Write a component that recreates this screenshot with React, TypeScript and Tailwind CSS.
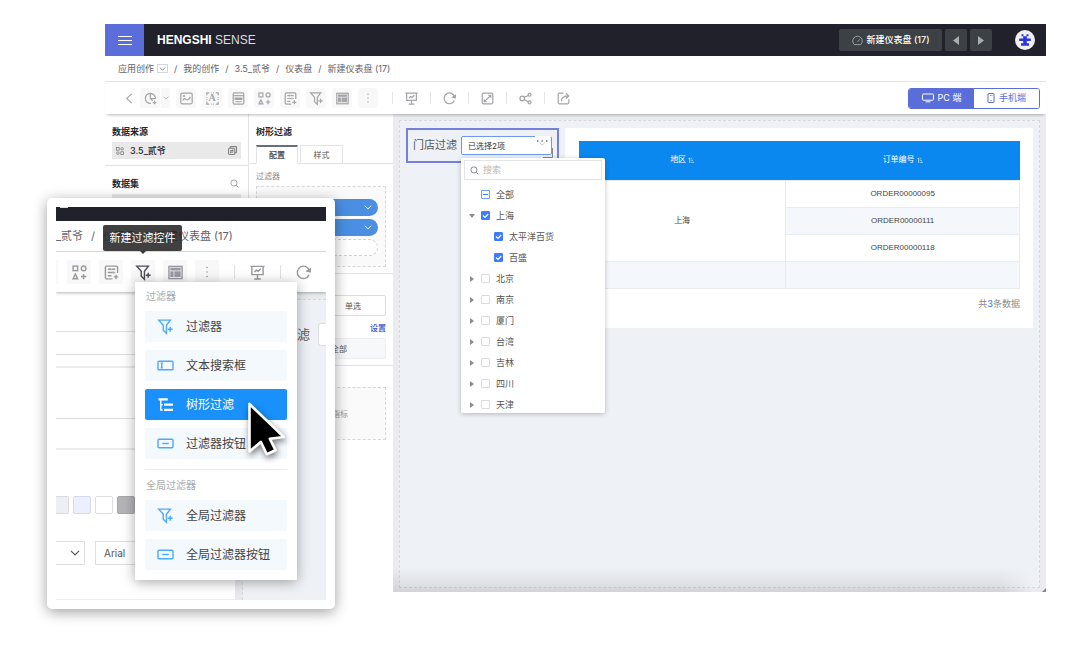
import type { ReactNode } from "react";

const icons: Record<string, ReactNode> = {
  chart: (
    <>
      <path d="M14 8.5A6.2 6.2 0 1 0 8.5 14M7.8 1.8V8.2H14M8 8.2l2.6 2.6" />
      <path d="M13 10.8v4.4M10.8 13h4.4" />
    </>
  ),
  image: (
    <>
      <rect x="1" y="1.5" width="14" height="13" rx="1.5" />
      <path d="M3.5 10.5C5 7.5 6 8 7.5 9.2S11 9 12.8 6" />
      <circle cx="5" cy="5" r=".6" />
    </>
  ),
  corners: (
    <>
      <path d="M1 4V1h3M12 1h3v3M15 12v3h-3M4 15H1v-3" />
      <path d="M6 1h4M6 15h4M1 6v4M15 6v4" strokeDasharray="1 1.5" />
    </>
  ),
  form: (
    <>
      <rect x="1.5" y="1" width="13" height="14" rx="1.5" />
      <path d="M1.5 4.5h13" />
      <path d="M4 7.5h8v1.5H4zM4 12h8" />
    </>
  ),
  shapes: (
    <>
      <rect x="1.2" y="1.2" width="4.8" height="4.8" />
      <circle cx="12.4" cy="3.6" r="2.5" />
      <path d="M3.6 9.7 1.2 14.6H6zM12.4 9.5v5.6M9.6 12.3h5.6" />
    </>
  ),
  list: (
    <>
      <path d="M14.5 8.5v-6A1.3 1.3 0 0 0 13.2 1.2H2.8a1.3 1.3 0 0 0-1.3 1.3v11a1.3 1.3 0 0 0 1.3 1.3H9" />
      <path d="M4 4.5h2M8 4.5h4M4 8h5M11 8h1M4 11.5h4M6.8 3.5v2M10 7v2" />
      <path d="M12.8 10.3v4.8M10.4 12.7h4.8" />
    </>
  ),
  funnel: (
    <>
      <path d="M.8 1.2h12.4L9 6.7v8.5L5.6 12V6.7z" />
      <path d="M13 8.3v5.2M10.4 10.9h5.2" />
    </>
  ),
  layout: (
    <>
      <rect x="1" y="1.5" width="14" height="13" />
      <path d="M3.2 3.8h9.600v1.400H3.200zM3.200 7.500h2v4.500h-2zM7.500 7.500h5.300v4.500H7.500z" fill="currentColor" />
    </>
  ),
  board: (
    <>
      <path d="M.5 1.5h15M2 1.5v8.8h12V1.5M8 10.5V15M4.5 15h7M4.8 7.5l2-2 1.8 1.2L11.5 4" />
    </>
  ),
  refresh: (
    <>
      <path d="M14 10.5A6.6 6.6 0 1 1 14.5 7" />
      <path d="M11.8 6.400 15 7.4l.3-3.200z" fill="currentColor" />
    </>
  ),
  expand: (
    <>
      <rect x="1.5" y="1.5" width="13" height="13" rx="1.5" />
      <path d="m4.2 11.8 7.6-7.6M8.8 4h3.2v3.2M7.2 12H4V8.8" />
    </>
  ),
  share: (
    <>
      <circle cx="4" cy="8" r="2.8" />
      <circle cx="13" cy="3.4" r="1.8" />
      <circle cx="13" cy="12.8" r="1.8" />
      <path d="m6.5 6.7 4.8-2.4M6.5 9.3l4.8 2.6" />
    </>
  ),
  export: (
    <>
      <path d="M8 1.5H3A1.5 1.5 0 0 0 1.5 3v10A1.5 1.5 0 0 0 3 14.5h10a1.5 1.5 0 0 0 1.5-1.5V9" />
      <path d="M5.5 11.5C5.3 7 8.5 4.8 14 4.8M11 1.5l3.5 3.3L11 8" />
    </>
  ),
  search: (
    <>
      <circle cx="7" cy="7" r="5.5" />
      <path d="m11 11 4 4" />
    </>
  ),
  textbox: (
    <>
      <rect x="0" y="3.4" width="16" height="9.2" rx="1" />
      <path d="M4 5.6v4.8M2.9 5.6h2.2M2.9 10.4h2.2" />
    </>
  ),
  pill: (
    <>
      <rect x="0" y="3.4" width="16" height="9.2" rx="1.2" />
      <path d="M4.5 8h7" />
    </>
  ),
  tree: (
    <>
      <path d="M.5 2.5h10M6.5 8.2H16M6.5 13.8H16" strokeWidth="2.4" />
      <path d="M3 3v10.8h2M3 8.2h2" />
    </>
  ),
  source: (
    <>
      <rect x="1.2" y="1.2" width="5.2" height="5.2" />
      <rect x="9.6" y="1.2" width="5.2" height="5.2" rx="2.6" />
      <rect x="1.2" y="9.6" width="5.2" height="5.2" rx="2.6" />
      <rect x="9.6" y="9.6" width="5.2" height="5.2" />
    </>
  ),
  swap: (
    <>
      <path d="M4 3.5V1h11v11h-2.5" />
      <rect x="1" y="4" width="11" height="11" rx="1" />
      <path d="M3.5 8.3h6L7.7 6.6M9.5 10.8h-6l1.8 1.7" />
    </>
  ),
};

function Icon({ name, className }: { name: string; className: string }) {
  return (
    <svg
      viewBox="0 0 16 16"
      className={`shrink-0 overflow-visible ${className}`}
      fill="none"
      stroke="currentColor"
      strokeWidth="1.5"
      aria-hidden="true"
    >
      {icons[name]}
    </svg>
  );
}

function Chevron({ className }: { className: string }) {
  return (
    <svg viewBox="0 0 10 6" className={`shrink-0 ${className}`} fill="none" stroke="currentColor" strokeWidth="1.2" aria-hidden="true">
      <path d="m1 .8 4 4 4-4" />
    </svg>
  );
}

function Dots({ className }: { className: string }) {
  return (
    <svg viewBox="0 0 2 12" className={className} fill="currentColor" aria-hidden="true">
      <circle cx="1" cy="1.5" r=".8" />
      <circle cx="1" cy="6" r=".8" />
      <circle cx="1" cy="10.5" r=".8" />
    </svg>
  );
}

function TopBar() {
  return (
    <header className="flex h-8 shrink-0 items-center bg-[#21212b] text-white">
      <button aria-label="菜单" className="flex h-full w-[39px] items-center justify-center bg-[#5a6dd8]">
        <svg viewBox="0 0 14 11" className="h-[11px] w-[14px]" stroke="white" strokeWidth="1.1" aria-hidden="true">
          <path d="M0 1.5h14M0 5.5h14M0 9.5h14" />
        </svg>
      </button>
      <h1 className="ml-[13px] flex-1 font-[Liberation_Sans] text-[12px]">
        <b>HENGSHI</b> <span className="text-[#dcdce0]">SENSE</span>
      </h1>
      <button className="flex h-[22px] w-[103px] items-center justify-center gap-1 rounded-[2px] bg-[#3c4145] text-[9px] font-medium whitespace-nowrap">
        <svg viewBox="0 0 12 12" className="size-[11px]" fill="none" stroke="#a5a8ab" strokeWidth="1" aria-hidden="true">
          <path d="M2.6 10.5A5.2 5.2 0 1 1 9.4 10.5zM6 7.5l2.5-2.8" />
        </svg>
        新建仪表盘 (17)
      </button>
      <button aria-label="上一个" className="ml-[3px] flex h-[22px] w-[22px] items-center justify-center rounded-[2px] bg-[#3c4145] text-[#a9acaf]">
        <svg viewBox="0 0 6 9" className="h-[9px] w-[6px]" fill="currentColor"><path d="M6 0v9L0 4.5z" /></svg>
      </button>
      <button aria-label="下一个" className="ml-[3px] flex h-[22px] w-[22px] items-center justify-center rounded-[2px] bg-[#3c4145] text-[#a9acaf]">
        <svg viewBox="0 0 6 9" className="h-[9px] w-[6px]" fill="currentColor"><path d="M0 0v9l6-4.5z" /></svg>
      </button>
      <button aria-label="用户" className="mr-[11px] ml-[23px] size-5 rounded-full bg-[#f0f0f2]">
        <svg viewBox="0 0 20 20" className="size-5" fill="#2b35dc" aria-hidden="true">
          <path d="M6.500 4.300h2v2h3v-2h2v2h-1.700v2.200h4v2.500h-4v2.300H14v2.400H6v-2.400h2.200v-2.300h-4V8.500h4V6.300H6.500z" />
        </svg>
      </button>
    </header>
  );
}

function Breadcrumb() {
  return (
    <nav className="flex h-[26px] shrink-0 items-center gap-[6px] border-b border-[#e4e4e7] pl-[13px] text-[9px] text-[#60606c]">
      <span className="flex items-center gap-[3px]">
        <a href="#apps">应用创作</a>
        <button aria-label="展开" className="flex h-[9px] w-[11px] items-center justify-center border border-[#d6d6da]">
          <Chevron className="h-[4px] w-[7px]" />
        </button>
      </span>
      <span>/</span>
      <a href="#mine">我的创作</a>
      <span>/</span>
      <a href="#app">3.5_贰爷</a>
      <span>/</span>
      <a href="#dashboards">仪表盘</a>
      <span>/</span>
      <span>新建仪表盘 (17)</span>
    </nav>
  );
}

function ToolButton({ label, children }: { label: string; children: ReactNode }) {
  return (
    <button aria-label={label} className="flex size-5 items-center justify-center rounded-[3px] bg-[#f8f8f8]">
      {children}
    </button>
  );
}

const actions = [
  ["演示", "board"],
  ["刷新", "refresh"],
  ["全屏", "expand"],
  ["分享", "share"],
  ["导出", "export"],
];

function Toolbar() {
  return (
    <div className="z-[2] flex h-8 shrink-0 items-center bg-white pr-[6px] pl-[20px] text-[#a4a4a9] shadow-[0_3px_3px_-2px_rgba(0,0,0,0.28)]">
      <button aria-label="返回" className="mr-[7px]">
        <svg viewBox="0 0 8 12" className="h-[11px] w-[8px]" fill="none" stroke="currentColor" strokeWidth="1.2"><path d="M7 1 1.500 6 7 11" /></svg>
      </button>
      <div className="flex gap-[6px]">
        <div className="flex gap-px">
          <ToolButton label="图表"><Icon name="chart" className="size-[13px]" /></ToolButton>
          <button aria-label="更多图表" className="flex h-5 w-[9px] items-center justify-center rounded-[2px] bg-[#f8f8f8]">
            <Chevron className="h-[4px] w-[6px]" />
          </button>
        </div>
        <ToolButton label="图片"><Icon name="image" className="size-[13px]" /></ToolButton>
        <ToolButton label="文本">
          <span className="grid place-items-center">
            <Icon name="corners" className="col-start-1 row-start-1 size-[13px]" />
            <b className="col-start-1 row-start-1 font-[Liberation_Serif] text-[10px] leading-none">A</b>
          </span>
        </ToolButton>
        <ToolButton label="表单"><Icon name="form" className="size-[13px]" /></ToolButton>
        <ToolButton label="图形"><Icon name="shapes" className="size-[13px]" /></ToolButton>
        <ToolButton label="列表"><Icon name="list" className="size-[13px]" /></ToolButton>
        <ToolButton label="过滤控件"><Icon name="funnel" className="size-[13px]" /></ToolButton>
        <ToolButton label="布局"><Icon name="layout" className="size-[13px]" /></ToolButton>
        <ToolButton label="更多"><Dots className="h-[10px] w-[2px]" /></ToolButton>
      </div>
      <div className="ml-[14px] flex flex-1">
        {actions.map(([label, icon]) => (
          <div key={label} className="flex w-[38px] items-center gap-[12px]">
            <span className="h-3 w-px bg-[#e4e4e6]" />
            <button aria-label={label}><Icon name={icon} className="size-[13px]" /></button>
          </div>
        ))}
      </div>
      <div className="flex h-[21px] overflow-hidden rounded-[3px] border border-[#5a6dd8] text-[9px] text-[#5a6dd8]">
        <button className="flex w-[65px] items-center justify-center gap-1 bg-[#5a6dd8] text-white">
          <svg viewBox="0 0 12 10" className="h-[10px] w-[12px]" fill="none" stroke="currentColor" aria-hidden="true">
            <rect x=".5" y="1" width="11" height="6.200" rx=".8" />
            <path d="M3.500 8.800h5" />
          </svg>
          PC 端
        </button>
        <button className="flex w-[65px] items-center justify-center gap-1 bg-white">
          <svg viewBox="0 0 8 10" className="h-[10px] w-[8px]" fill="none" stroke="currentColor" aria-hidden="true">
            <rect x="1" y=".5" width="6" height="9" rx=".5" />
            <path d="M3 2.500h.8M4.500 2.500h.8M3.500 7.500h1" />
          </svg>
          手机端
        </button>
      </div>
    </div>
  );
}

function DataPanel() {
  return (
    <aside className="w-36 shrink-0 border-r border-[#e3e3e6] text-[9px] text-[#26262e]">
      <section className="h-[52px] border-b border-[#e3e3e6] px-[7px] pt-[11px]">
        <h2 className="leading-[14px] font-bold">数据来源</h2>
        <div className="mt-[3px] flex h-[17px] items-center bg-[#e9e9e9] px-1 font-medium">
          <Icon name="source" className="mr-[6px] size-2 text-[#777]" />
          <span className="flex-1">3.5_贰爷</span>
          <Icon name="swap" className="size-[9px] text-[#666]" />
        </div>
      </section>
      <section className="px-[7px] pt-[10px]">
        <div className="flex h-[15px] items-center justify-between">
          <h2 className="font-bold">数据集</h2>
          <button aria-label="搜索数据集" className="mr-[2px] text-[#999]"><Icon name="search" className="size-[9px]" /></button>
        </div>
        <div className="mt-[3px] h-[17px] bg-[#e9e9e9]" />
      </section>
    </aside>
  );
}

function FilterPill() {
  return (
    <button aria-label="过滤字段" className="flex h-[17px] w-full items-center justify-end rounded-full bg-[#4a8fe2] pr-[6px] text-white">
      <Chevron className="h-[5px] w-[8px]" />
    </button>
  );
}

function ConfigPanel() {
  return (
    <aside className="w-36 shrink-0 bg-white text-[8px] text-[#555]">
      <h2 className="px-[7px] pt-[11px] text-[9px] leading-[14px] font-bold text-[#26262e]">树形过滤</h2>
      <div className="mt-[6px] flex h-[19px] gap-[2px] border-b border-[#e3e3e6] px-[7px]">
        <button className="-mb-px w-[42px] border border-t-2 border-[#e3e3e6] border-t-[#65707c] border-b-white font-bold">配置</button>
        <button className="w-[43px] border border-b-0 border-[#e3e3e6]">样式</button>
      </div>
      <section className="h-[110px] border-b border-[#e3e3e6] px-[7px] pt-[6px]">
        <h3 className="leading-[12px] text-[#888]">过滤器</h3>
        <div className="mt-1 flex h-[81px] flex-col gap-[3px] border border-dashed border-[#d8d8db] bg-[#fafafa] px-[7px] pt-[12px]">
          <FilterPill />
          <FilterPill />
          <div className="h-[17px] rounded-full border border-dashed border-[#d0d0d4] bg-white" />
        </div>
      </section>
      <section className="h-[92px] border-b border-[#e3e3e6] px-[7px] pt-[21px]">
        <div className="flex h-[21px] rounded-[2px] border border-[#dcdcdf]">
          <button className="flex-1">多选</button>
          <button className="flex-1">单选</button>
        </div>
        <div className="flex h-[22px] items-center justify-end pt-px font-medium"><a href="#settings" className="text-[#3b49d8]">设置</a></div>
        <div className="flex h-[21px] items-center justify-end rounded-[2px] border border-[#eeeef0] bg-[#f7f8fa] pr-[38px]">全部</div>
      </section>
      <section className="px-[7px] pt-[21px]">
        <div className="flex h-[53px] items-center justify-end border border-dashed border-[#d8d8db] bg-[#fafafa] pr-[37px] text-[#999]">指标</div>
      </section>
    </aside>
  );
}

type Node = { name: string; state: "on" | "off" | "mixed"; level: number; open?: boolean };

const nodes: Node[] = [
  { name: "全部", state: "mixed", level: 0 },
  { name: "上海", state: "on", level: 0, open: true },
  { name: "太平洋百货", state: "on", level: 1 },
  { name: "百盛", state: "on", level: 1 },
  { name: "北京", state: "off", level: 0, open: false },
  { name: "南京", state: "off", level: 0, open: false },
  { name: "厦门", state: "off", level: 0, open: false },
  { name: "台湾", state: "off", level: 0, open: false },
  { name: "吉林", state: "off", level: 0, open: false },
  { name: "四川", state: "off", level: 0, open: false },
  { name: "天津", state: "off", level: 0, open: false },
];

function TreeRow({ node }: { node: Node }) {
  return (
    <li className={`flex h-[21px] items-center pl-2 ${node.level === 1 ? "ml-[13px]" : ""}`}>
      <span className="flex w-3 items-center">
        {node.open !== undefined && (
          <button aria-label={`展开${node.name}`} className="text-[#8c8c8c]">
            <svg viewBox="0 0 6 6" className="size-[6px]" fill="currentColor">
              <path d={node.open ? "M0 1h6L3 5z" : "M1 0v6l4-3z"} />
            </svg>
          </button>
        )}
      </span>
      <label className="flex items-center">
        <span className="grid">
          <input
            type="checkbox"
            defaultChecked={node.state === "on"}
            className={`col-start-1 row-start-1 size-[9px] appearance-none rounded-[1px] border ${
              node.state === "on" ? "border-[#3d7bff] bg-[#3d7bff]" : node.state === "mixed" ? "border-[#6f9cff]" : "border-[#dcdcdc]"
            }`}
          />
          <svg viewBox="0 0 9 9" className="pointer-events-none col-start-1 row-start-1 size-[9px]" fill="none" strokeWidth="1.2" aria-hidden="true">
            {node.state === "on" && <path d="M2 4.500 4 6.400 7.200 3" stroke="white" />}
            {node.state === "mixed" && <path d="M2 4.500h5" stroke="#3d7bff" />}
          </svg>
        </span>
        <span className="ml-[6px]">{node.name}</span>
      </label>
    </li>
  );
}

function StoreFilter() {
  return (
    <section className="relative z-[1] flex h-[35px] w-[153px] shrink-0 items-center border-2 border-[#7580dc] pl-[5px]">
      <h2 id="store-label" className="w-12 text-[11px] whitespace-nowrap text-[#555]">门店过滤</h2>
      <div className="relative">
        <button
          aria-labelledby="store-label"
          className="flex h-[19px] w-[91px] items-center justify-between rounded-[2px] border border-[#6b98f5] bg-white pl-[6px] text-[8px] text-[#333]"
        >
          已选择2项
          <svg viewBox="0 0 16 16" className="-mt-[3px] h-4 w-4" fill="none" aria-hidden="true">
            <path d="M-2 0h18" stroke="white" strokeWidth="2" />
            <path d="M2 5h1.400M6.500 5h1.400M11 5h1.400" stroke="#666" strokeWidth="1.300" />
            <path d="M4.500 6.500 7.200 9.200l2.700-2.700" stroke="#b5b5b5" strokeWidth=".8" />
          </svg>
        </button>
        <svg viewBox="0 0 10 10" className="absolute top-[12px] right-[-1px] size-[10px]" fill="none" stroke="#888" aria-hidden="true">
          <path d="M9.500 0v9.500H0" />
        </svg>
        <div className="absolute top-[22px] left-0 w-[144px] overflow-hidden rounded-[2px] bg-white shadow-[0_1px_5px_rgba(0,0,0,0.25)]">
          <label className="mx-[3px] mt-[2px] flex h-5 items-center gap-1 border border-[#e2e4e8] pl-[5px] text-[#777]">
            <Icon name="search" className="size-[9px]" />
            <input aria-label="搜索" placeholder="搜索" className="w-full min-w-0 text-[9px] outline-none placeholder:text-[#b8b8b8]" />
          </label>
          <ul className="mt-1 -mb-[2px] text-[9px] leading-none text-[#555]">
            {nodes.map((n) => <TreeRow key={n.name} node={n} />)}
          </ul>
        </div>
      </div>
    </section>
  );
}

function SortMark() {
  return (
    <svg viewBox="0 0 7 7" className="ml-[2px] inline size-[6px]" fill="none" stroke="currentColor" strokeWidth=".8" aria-hidden="true">
      <path d="M2 7V1L.5 2.500M3.800 1.500h1M3.800 3.800h2M3.800 6.200h3" />
    </svg>
  );
}

function OrderCard() {
  return (
    <section className="min-w-0 flex-1 bg-white px-[13px] pt-[13px] pb-[17px]">
      <table className="w-full border-collapse text-center font-[Liberation_Sans,Noto_Sans_CJK_SC,sans-serif] text-[8px] text-[#444]">
        <thead>
          <tr className="h-[39px] bg-[#0a88ef] text-white">
            <th className="w-[47%] font-normal">地区<SortMark /></th>
            <th className="font-normal">订单编号<SortMark /></th>
          </tr>
        </thead>
        <tbody>
          <tr className="h-[27px]">
            <td rowSpan={3} className="border border-[#e9ecef]">上海</td>
            <td className="border border-[#e9ecef]">ORDER00000095</td>
          </tr>
          <tr className="h-[27px]"><td className="border border-[#e9ecef] bg-[#f4f8fc]">ORDER00000111</td></tr>
          <tr className="h-[27px]"><td className="border border-[#e9ecef]">ORDER00000118</td></tr>
          <tr className="h-[27px] bg-[#f4f8fc]">
            <td className="border border-[#e9ecef]" />
            <td className="border border-[#e9ecef]" />
          </tr>
        </tbody>
      </table>
      <p className="mt-2 text-right text-[9px] leading-[14px] text-[#888]">共<span className="font-medium text-[#3d7bff]">3</span>条数据</p>
    </section>
  );
}

const menuGroups = [
  {
    title: "过滤器",
    items: [
      ["过滤器", "funnel"],
      ["文本搜索框", "textbox"],
      ["树形过滤", "tree"],
      ["过滤器按钮", "pill"],
    ],
  },
  {
    title: "全局过滤器",
    items: [
      ["全局过滤器", "funnel"],
      ["全局过滤器按钮", "pill"],
    ],
  },
];

function FilterMenu() {
  return (
    <div className="absolute top-[75px] left-[79px] w-[162px] bg-white px-[10px] pb-[10px] shadow-[0_2px_12px_rgba(0,0,0,0.35)]">
      {menuGroups.map((g, i) => (
        <section key={g.title} className={i === 0 ? "" : "mt-[10px] border-t border-[#ececee] pt-px"}>
          <h3 className="flex h-[29px] items-center pl-px text-[10px] text-[#aaa]">{g.title}</h3>
          <div className="flex flex-col gap-2">
            {g.items.map(([label, icon]) => (
              <button
                key={label}
                className={`flex h-[31px] items-center rounded-[2px] pl-[13px] text-[12px] ${
                  label === "树形过滤" ? "bg-[#1a90fa] text-white" : "bg-[#f4f9fe] text-[#444]"
                }`}
              >
                <Icon name={icon} className={`mr-[13px] size-[15px] ${label === "树形过滤" ? "text-white" : "text-[#4da9fb]"}`} />
                {label}
              </button>
            ))}
          </div>
        </section>
      ))}
      <svg viewBox="0 0 40 54" className="absolute top-[119px] left-[112px] h-[54px] w-10 overflow-visible drop-shadow-[1px_3px_3px_rgba(0,0,0,0.5)]" aria-hidden="true">
        <path d="M2.500 3v47.500l11.300-9.600 6 12.300 8.700-4-5.700-11.500 14-1.700z" fill="black" stroke="white" strokeWidth="2.600" strokeLinejoin="round" />
      </svg>
    </div>
  );
}

function MagnifiedTool({ name, dark }: { name: string; dark?: boolean }) {
  return (
    <button aria-label={name} className={`flex size-6 shrink-0 items-center justify-center rounded-[3px] bg-[#f8f8f8] ${dark ? "text-[#4c4c5a]" : ""}`}>
      {name === "more" ? <Dots className="h-3 w-[2px]" /> : <Icon name={name} className="size-[15px]" />}
    </button>
  );
}

function Magnifier() {
  return (
    <div className="absolute top-[198px] left-[47px] z-10 w-[288px] rounded-[5px] bg-white p-[9px] shadow-[0_3px_14px_rgba(0,0,0,0.38)]">
      <div className="relative">
        <div className="overflow-hidden">
          <div className="h-[14px] bg-[#21212b]"><div className="ml-[4px] h-px w-2 bg-[#ddd]" /></div>
          <nav className="flex h-[31px] items-center gap-2 border-b border-[#e4e4e7] pt-px text-[11px] whitespace-nowrap text-[#60606c]">
            <span>_贰爷</span>
            <span>/</span>
            <span>仪表盘</span>
            <span>/</span>
            <span>新建仪表盘 (17)</span>
          </nav>
          <div className="relative flex h-10 items-center bg-white text-[#98989f] shadow-[0_1px_3px_rgba(0,0,0,0.3)]">
            <span className="mr-[9px] h-6 w-[2px] shrink-0 bg-[#f8f8f8]" />
            <div className="flex gap-2">
              <MagnifiedTool name="shapes" />
              <MagnifiedTool name="list" />
              <MagnifiedTool name="funnel" dark />
              <MagnifiedTool name="layout" />
              <MagnifiedTool name="more" />
            </div>
            <span className="mx-[15px] h-[14px] w-px shrink-0 bg-[#e0e0e3]" />
            <Icon name="board" className="size-[15px]" />
            <span className="mx-[15px] h-[14px] w-px shrink-0 bg-[#e0e0e3]" />
            <Icon name="refresh" className="size-[15px]" />
          </div>
          <div className="flex h-[308px]">
            <div className="w-[179px] border-b border-[#eeeeef]">
              <div className="h-10 border-b border-[#dfdfe2]" />
              <div className="h-[23px] border-b border-[#dfdfe2]" />
              <div className="h-[13px] border-b-2 border-[#ececee]" />
              <div className="h-[51px] border-b border-[#dfdfe2]" />
              <div className="h-[31px] border-b-2 border-[#ececee]" />
              <div className="mt-[46px] flex gap-[4px]">
                <span className="h-[18px] w-[13px] rounded-r-[2px] border border-l-0 border-[#dcdce0] bg-[#eeeff4]" />
                <span className="size-[18px] rounded-[2px] border border-[#d5dae6] bg-[#eaf0fd]" />
                <span className="size-[18px] rounded-[2px] border border-[#dedee0] bg-white" />
                <span className="size-[18px] rounded-[2px] border border-[#a8a8aa] bg-[#b4b4b6]" />
              </div>
              <div className="mt-[27px] flex gap-[10px] text-[10px] text-[#555]">
                <button aria-label="字号" className="flex h-6 w-[29px] items-center justify-end border border-l-0 border-[#dedee1] pr-1"><Chevron className="h-[6px] w-[10px]" /></button>
                <button className="flex h-6 w-[90px] items-center border border-[#dedee1] pl-2">Arial</button>
              </div>
            </div>
            <div className="flex-1 bg-[#e9eaef] pt-[7px] pl-[7px]">
              <div className="flex h-full items-start justify-between border-t border-l border-dashed border-[#d5d8dd] bg-[#eef2f6] pt-[23px] pl-[54px]">
                <span className="pt-[2px] text-[13px] text-[#555]">滤</span>
                <span className="h-[23px] w-2 rounded-l-[3px] border border-r-0 border-[#dcdfe3] bg-white" />
              </div>
            </div>
          </div>
        </div>
        <div role="tooltip" className="absolute top-[18px] left-[47px] flex h-[26px] w-[79px] items-center justify-center rounded-[2px] bg-[rgba(38,38,38,0.88)] text-[11px] whitespace-nowrap text-white">
          新建过滤控件
          <svg viewBox="0 0 6 3" className="absolute top-full left-[37px] h-[3px] w-[6px]" fill="#38383a" aria-hidden="true"><path d="M0 0h6L3 3z" /></svg>
        </div>
        <FilterMenu />
      </div>
    </div>
  );
}

export default function App() {
  return (
    <main className="relative flex min-h-screen flex-col bg-white pt-6 pr-[34px] pb-[55px] pl-[105px] font-[Inter,Noto_Sans_CJK_SC,sans-serif]">
      <div className="flex flex-1 flex-col">
        <TopBar />
        <Breadcrumb />
        <Toolbar />
        <div className="flex flex-1">
          <DataPanel />
          <ConfigPanel />
          <div className="relative flex min-w-0 flex-1 bg-[#ebebf0] p-[6px] pb-1">
            <div className="flex flex-1 items-start gap-[6px] border border-dashed border-[#d5d8dd] bg-[#eef2f6] p-[6px] pt-[7px]">
              <StoreFilter />
              <OrderCard />
            </div>
            <div className="pointer-events-none absolute inset-x-0 bottom-0 h-6 bg-linear-to-b from-transparent to-black/10 [mask-image:linear-gradient(to_right,black_93%,transparent_98%)]" />
            <svg viewBox="0 0 4 4" className="absolute right-0 bottom-0 size-1" fill="#888" aria-hidden="true"><path d="M4 0v4H0z" /></svg>
          </div>
        </div>
      </div>
      <Magnifier />
    </main>
  );
}
